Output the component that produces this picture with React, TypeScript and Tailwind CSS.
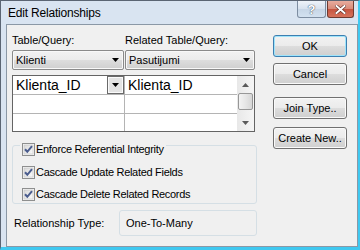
import React from 'react';

const btnBg = 'bg-[linear-gradient(#f2f2f2,#ebebeb_50%,#dddddd_50%,#cfcfcf)]';

function Arrow({ up = false, color = '#000' }: { up?: boolean; color?: string }) {
  return (
    <svg width="7" height="4" viewBox="0 0 7 4" className="block">
      <path d={up ? 'M0 4 L3.5 0 L7 4 Z' : 'M0 0 L7 0 L3.5 4 Z'} fill={color} />
    </svg>
  );
}

function CheckBox() {
  return (
    <svg width="13" height="13" viewBox="0 0 13 13" className="block shrink-0">
      <defs>
        <linearGradient id="cbg" x1="0" y1="0" x2="1" y2="1">
          <stop offset="0" stopColor="#d8d8d8" />
          <stop offset="1" stopColor="#fbfbfb" />
        </linearGradient>
      </defs>
      <rect x="0.5" y="0.5" width="12" height="12" fill="#f6f6f6" stroke="#8e8f8f" />
      <rect x="2" y="2" width="9" height="9" fill="url(#cbg)" stroke="#c4c4c4" strokeWidth="0.6" />
      <path d="M3 6.3 L5.3 8.8 L10 3.2" fill="none" stroke="#4b5d8e" strokeWidth="2" />
    </svg>
  );
}

function Button({ label, def = false }: { label: string; def?: boolean }) {
  return (
    <div
      className={
        def
          ? `h-[22px] w-[74px] flex items-center justify-center rounded-[3px] border border-[#3c7fb1] shadow-[inset_0_0_0_1px_#9fe4fb] ${btnBg} text-[11px] text-black`
          : `h-[22px] w-[74px] flex items-center justify-center rounded-[3px] border border-[#707070] shadow-[inset_0_0_0_1px_#fafafa] ${btnBg} text-[11px] text-black`
      }
    >
      {label}
    </div>
  );
}

function Combo({ text, width }: { text: string; width: string }) {
  return (
    <div className={`${width} h-[20px] flex items-center justify-between pl-[3px] pr-[4px] rounded-[2px] border border-[#8a8a8a] ${btnBg} shadow-[inset_0_0_0_1px_#f8f8f8]`}>
      <span className="text-[11px] leading-[13px] text-black">{text}</span>
      <Arrow />
    </div>
  );
}

function CheckRow({ label, className }: { label: string; className: string }) {
  return (
    <div className={`flex items-center gap-[1px] h-[13px] ${className}`}>
      <CheckBox />
      <span className="text-[11px] leading-[13px] tracking-[-0.3px] text-black">{label}</span>
    </div>
  );
}

export default function App() {
  return (
    <div className="w-[360px] h-[250px] flex flex-col bg-[#d9e4f1] border-l border-t border-l-[#5b6573] border-t-[#5b6573] border-r-2 border-b-[3px] border-r-[#3fc8f0] border-b-[#3fc8f0] font-['Liberation_Sans',Arial,sans-serif] overflow-hidden">
      {/* title bar */}
      <div className="h-[23px] shrink-0 flex items-start pl-[7px] pr-[4px]">
        <div className="flex-1 pt-[5px] text-[12px] leading-[14px] tracking-[-0.2px] text-black">Edit Relationships</div>
        <div className="flex gap-[1px]">
          <div className="w-[29px] h-[17px] flex items-center justify-center rounded-b-[3px] border border-[#7d8da1] border-t-0 bg-[linear-gradient(#eef3f9,#d6e1ee_50%,#c6d5e6_50%,#d3e1f0)]">
            <span className="text-[13px] font-bold leading-[13px] text-white [text-shadow:0_0_1px_#3c4a5c,0_0_1px_#3c4a5c]">?</span>
          </div>
          <div className="w-[27px] h-[17px] flex items-center justify-center rounded-b-[3px] border border-[#6e3a30] border-t-0 bg-[linear-gradient(#e8ac9e,#d88a78_50%,#c5533f_50%,#d6735c)]">
            <svg width="11" height="9" viewBox="0 0 11 9">
              <path d="M1.5 1 L9.5 8 M9.5 1 L1.5 8" stroke="#5a2a22" strokeWidth="3.2" strokeLinecap="square" />
              <path d="M1.5 1 L9.5 8 M9.5 1 L1.5 8" stroke="#ffffff" strokeWidth="2" strokeLinecap="square" />
            </svg>
          </div>
        </div>
      </div>

      {/* client area */}
      <div className="flex-1 ml-[5px] border border-[#8b98a6] bg-[#f0f0f0] flex">
        <div className="pl-[5px] pt-[9px] w-[250px] shrink-0 flex flex-col">
          <div className="flex text-[11px] leading-[13px] text-black">
            <span className="w-[113px]">Table/Query:</span>
            <span>Related Table/Query:</span>
          </div>
          <div className="mt-[3px] flex gap-[1px]">
            <Combo text="Klienti" width="w-[112px]" />
            <Combo text="Pasutijumi" width="w-[130px]" />
          </div>

          {/* grid */}
          <div className="mt-[5px] w-[243px] h-[57px] border border-[#646464] bg-white flex">
            <div className="w-[224px] flex flex-col">
              <div className="h-[19px] flex border-b border-[#b4b4b4]">
                <div className="w-[112px] flex border-r border-[#b4b4b4]">
                  <div className="flex-1 pl-[3px] text-[14px] leading-[18px] text-black">Klienta_ID</div>
                  <div className="w-[17px] h-[18px] flex items-center justify-center border border-[#6a6a6a] bg-[#e3e3e3] shadow-[inset_0_0_0_1px_#fafafa]">
                    <Arrow />
                  </div>
                </div>
                <div className="flex-1 pl-[3px] text-[14px] leading-[18px] text-black">Klienta_ID</div>
              </div>
              <div className="h-[19px] flex border-b border-[#b4b4b4]">
                <div className="w-[112px] border-r border-[#b4b4b4]" />
                <div className="flex-1" />
              </div>
              <div className="h-[17px] flex">
                <div className="w-[112px] border-r border-[#b4b4b4]" />
                <div className="flex-1" />
              </div>
            </div>
            <div className="w-[17px] flex flex-col bg-[linear-gradient(90deg,#e8e8e8,#f5f5f5)]">
              <div className="h-[17px] flex items-center justify-center">
                <Arrow up color="#5a5a5a" />
              </div>
              <div className="mx-[1px] h-[17px] rounded-[2px] border border-[#979797] bg-[linear-gradient(90deg,#f3f3f3,#e6e6e6_50%,#d6d6d6)]" />
              <div className="flex-1" />
              <div className="h-[17px] flex items-center justify-center">
                <Arrow color="#5a5a5a" />
              </div>
            </div>
          </div>

          {/* group */}
          <div className="mt-[13px] w-[245px] rounded-[3px] border border-[#d5dfe5] pl-[9px] pb-[2px] flex flex-col items-start">
            <CheckRow label="Enforce Referential Integrity" className="-mt-[3px] -ml-[2px] pl-[2px] pr-[2px] bg-[#f0f0f0]" />
            <CheckRow label="Cascade Update Related Fields" className="mt-[10px]" />
            <CheckRow label="Cascade Delete Related Records" className="mt-[9px]" />
          </div>

          <div className="mt-[6px] flex items-center">
            <span className="w-[107px] pl-[2px] text-[11px] leading-[13px] text-black">Relationship Type:</span>
            <div className="w-[138px] h-[26px] flex items-center pl-[6px] rounded-[3px] border border-[#d5dfe5] text-[11px] leading-[13px] text-black">
              One-To-Many
            </div>
          </div>
        </div>

        <div className="ml-[16px] pt-[10px] flex flex-col">
          <Button label="OK" def />
          <div className="mt-[6px]"><Button label="Cancel" /></div>
          <div className="mt-[12px]"><Button label="Join Type.." /></div>
          <div className="mt-[8px]"><Button label="Create New.." /></div>
        </div>
      </div>
    </div>
  );
}
